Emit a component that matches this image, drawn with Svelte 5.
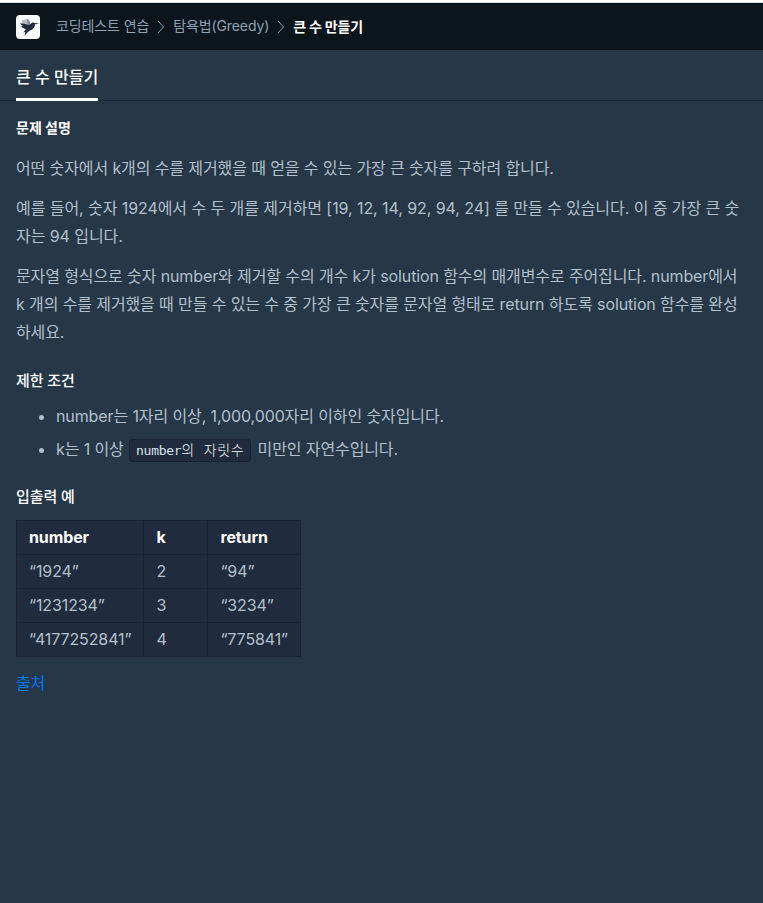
<script>
    const crumbs = ["코딩테스트 연습", "탐욕법(Greedy)"];
    const title = "큰 수 만들기";

    const rows = [
        { number: "1924", k: 2, result: "94" },
        { number: "1231234", k: 3, result: "3234" },
        { number: "4177252841", k: 4, result: "775841" }
    ];
</script>

<div class="page">
    <header class="navbar">
        <a class="logo" href="#home" aria-label="home">
            <svg viewBox="0 0 24 24" width="24" height="24">
                <path fill="#b7bcc5" d="M5.500 5.200 9.500 4.500l4 4.500-1.700 2-5-1.500z" />
                <path fill="#858c9b" d="m10.300 3 3.200 2.500.8 4-2.500.5z" />
                <path
                    fill="#202b3d"
                    d="M4 8.200c3 .3 6 .6 8.300 1.800 1-.3 1.800-.8 2.700-1.600.9-.9 2.100-1.100 3.300-.5l5.200.6-4.500.8c-.2 2.900-1.400 4.700-3.700 5.600-1.900.8-3.200 1.600-4.300 3.100l-2.500 2.800.8-4-2 .6 2.600-3.300C7.900 13.600 6 12.600 5.200 11l2 .1C5.700 10.400 4.500 9.400 4 8.200z"
                />
            </svg>
        </a>
        <nav class="breadcrumb">
            {#each crumbs as crumb}
                <a href="#crumb">{crumb}</a>
                <svg class="arrow" viewBox="0 0 8 14" width="8" height="14">
                    <path d="m1 1 5.500 6L1 13" fill="none" stroke="currentColor" />
                </svg>
            {/each}
            <strong>{title}</strong>
        </nav>
    </header>

    <div class="tabs">
        <span class="tab">{title}</span>
    </div>

    <main class="description">
        <h6>문제 설명</h6>
        <p>어떤 숫자에서 k개의 수를 제거했을 때 얻을 수 있는 가장 큰 숫자를 구하려 합니다.</p>
        <p class="sample">예를 들어, 숫자 1924에서 수 두 개를 제거하면 [19, 12, 14, 92, 94, 24] 를 만들 수 있습니다. 이 중 가장 큰 숫자는 94 입니다.</p>
        <p>문자열 형식으로 숫자 number와 제거할 수의 개수 k가 solution 함수의 매개변수로 주어집니다. number에서 k 개의 수를 제거했을 때 만들 수 있는 수 중 가장 큰 숫자를 문자열 형태로 return 하도록 solution 함수를 완성하세요.</p>

        <h5>제한 조건</h5>
        <ul>
            <li>number는 1자리 이상, 1,000,000자리 이하인 숫자입니다.</li>
            <li>k는 1 이상 <code>number<span>의 자릿수</span></code> 미만인 자연수입니다.</li>
        </ul>

        <h5>입출력 예</h5>
        <table>
            <thead>
                <tr>
                    <th>number</th>
                    <th>k</th>
                    <th>return</th>
                </tr>
            </thead>
            <tbody>
                {#each rows as row}
                    <tr>
                        <td>“{row.number}”</td>
                        <td>{row.k}</td>
                        <td>“{row.result}”</td>
                    </tr>
                {/each}
            </tbody>
        </table>
        <a class="source" href="#source">출처</a>
    </main>
</div>

<style>
    :global(body) {
        margin: 0;
        background-color: #263747;
    }
    .page {
        box-sizing: border-box;
        min-height: 100vh;
        border-top: 2px solid #fff;
        background-color: #263747;
        color: #b2c0cc;
        font-family: Inter, "Noto Sans CJK KR", sans-serif;
        font-size: 16px;
        line-height: 28px;
        letter-spacing: -0.11px;
    }
    a {
        color: inherit;
        text-decoration: none;
    }
    .navbar {
        box-sizing: border-box;
        display: flex;
        align-items: center;
        height: 48px;
        padding: 0 16px;
        border-top: 1px solid #d7dbe0;
        background-color: #0c151c;
    }
    .logo {
        width: 24px;
        height: 24px;
        margin-right: 16px;
        border-radius: 4px;
        background-color: #fff;
    }
    .logo svg {
        display: block;
    }
    .breadcrumb {
        display: flex;
        align-items: center;
        color: #8ca2b2;
        font-size: 14px;
        line-height: 24px;
    }
    .breadcrumb a {
        margin-bottom: 2px;
    }
    .arrow {
        margin: 1px 8px 0;
    }
    .breadcrumb strong {
        color: #fff;
        font-weight: 700;
        letter-spacing: -0.2px;
    }
    .tabs {
        box-sizing: border-box;
        display: flex;
        height: 51px;
        padding: 0 16px;
        border-bottom: 1px solid #172334;
    }
    .tab {
        box-sizing: border-box;
        height: 51px;
        padding-top: 13px;
        border-bottom: 3px solid #fff;
        color: #fff;
        font-weight: 500;
        letter-spacing: 0;
    }
    .description {
        padding: 15px 16px;
    }
    h5,
    h6 {
        color: #fff;
        font-size: 14px;
        line-height: 24px;
        letter-spacing: 0;
    }
    h6 {
        margin: 0 0 14px;
        font-weight: 700;
    }
    h5 {
        margin: 23px 0 9px;
        font-size: 15px;
        font-weight: 500;
        letter-spacing: -0.1px;
    }
    p {
        margin: 0 0 12px;
    }
    .sample {
        letter-spacing: -0.07px;
    }
    ul {
        margin: 0 0 22px;
        padding-left: 40px;
    }
    li {
        height: 28px;
    }
    li + li {
        margin-top: 5px;
    }
    ul + h5 {
        margin-top: 0;
        margin-bottom: 11px;
    }
    code {
        margin: 0 2px 0 1px;
        padding: 3px 6px;
        border: 1px solid #172334;
        border-radius: 4px;
        background-color: #202b3d;
        color: #d7e2eb;
        font-family: "DejaVu Sans Mono", "Noto Sans CJK KR", monospace;
        font-size: 13px;
        letter-spacing: -0.3px;
    }
    code span {
        color: #f0f6fa;
        font-size: 14px;
        font-weight: 300;
        line-height: 1;
        letter-spacing: 0.6px;
    }
    table {
        margin-bottom: 12px;
        border-collapse: collapse;
        background-color: #202b3d;
    }
    th,
    td {
        box-sizing: border-box;
        min-width: 64px;
        height: 34px;
        padding: 0 12px 2px;
        border: 1px solid #172334;
        line-height: 24px;
        text-align: left;
    }
    th {
        color: #fff;
        font-weight: 700;
    }
    .source {
        color: #0078ff;
    }
</style>
